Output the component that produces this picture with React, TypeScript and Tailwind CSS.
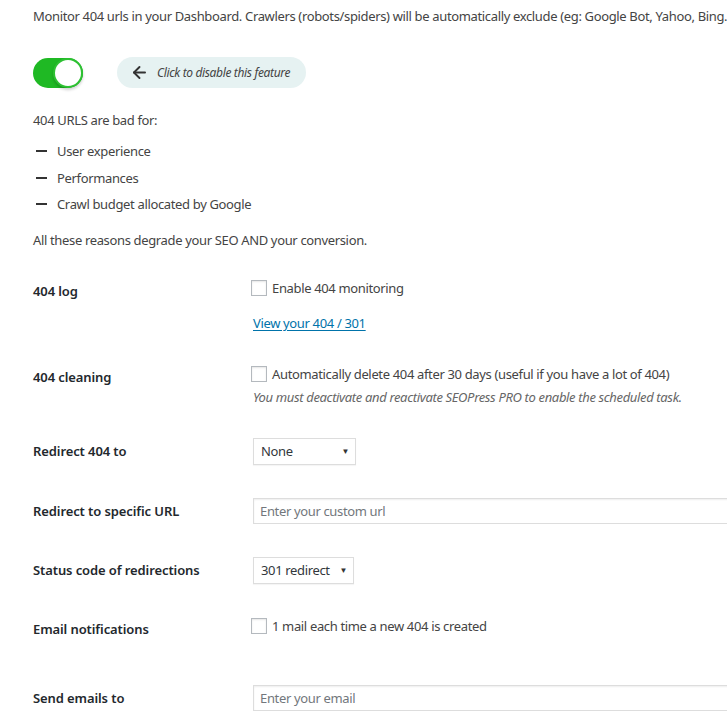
import React from "react";
import { ArrowLeft } from "lucide-react";

const Checkbox = () => (
  <span className="inline-block w-4 h-4 shrink-0 border border-[#b4b9be] bg-white shadow-[inset_0_1px_2px_rgba(0,0,0,0.1)]" />
);

const Select = ({ value, width }: { value: string; width: string }) => (
  <div
    className={`${width} h-[27px] flex items-center justify-between pl-[7px] pr-[6px] border border-[#ddd] bg-white shadow-[0_1px_1px_rgba(0,0,0,0.04)] text-[#32373c]`}
  >
    <span>{value}</span>
    <span className="text-[8px] leading-none text-[#333]">▼</span>
  </div>
);

const TextInput = ({ placeholder }: { placeholder: string }) => (
  <div className="w-[600px] h-[26px] flex items-center px-[6px] border border-[#ddd] bg-white shadow-[inset_0_1px_2px_rgba(0,0,0,0.07)] text-[#72777c]">
    {placeholder}
  </div>
);

const Row = ({
  label,
  className,
  children,
}: {
  label: string;
  className: string;
  children: React.ReactNode;
}) => (
  <div className={`flex ${className}`}>
    <div className="w-[220px] shrink-0 pt-[3px] font-semibold tracking-[-0.1px] text-[#23282d]">
      {label}
    </div>
    <div className="flex flex-col">{children}</div>
  </div>
);

const App = () => {
  return (
    <div
      className="w-[727px] h-[723px] overflow-hidden bg-white text-[13px] leading-5 tracking-[-0.35px] text-[#444]"
      style={{ fontFamily: '"Noto Sans", "Open Sans", sans-serif' }}
    >
      <div className="w-[1000px] pl-[33px] pt-[6px]">
        <p className="whitespace-nowrap">
          Monitor 404 urls in your Dashboard. Crawlers (robots/spiders) will be
          automatically exclude (eg: Google Bot, Yahoo, Bing...).
        </p>

        <div className="flex items-center gap-[34px] mt-[31px]">
          <div className="relative w-[50px] h-[30px] rounded-full bg-[#1fb924]">
            <span className="absolute right-0 top-0 w-[30px] h-[30px] rounded-full bg-white border-2 border-[#2dc132] shadow-[0_2px_3px_rgba(0,0,0,0.2)]" />
          </div>
          <div className="flex items-center gap-[8px] h-[31px] w-[189px] pl-[13px] rounded-full bg-[#e6f2f2]">
            <ArrowLeft size={19} strokeWidth={2.4} className="text-[#333]" />
            <span className="italic text-[12px] text-[#444]">
              Click to disable this feature
            </span>
          </div>
        </div>

        <p className="mt-[22px]">404 URLS are bad for:</p>
        <ul className="mt-[8px]">
          {[
            "User experience",
            "Performances",
            "Crawl budget allocated by Google",
          ].map((item) => (
            <li key={item} className="flex items-center h-[26.5px]">
              <span className="inline-block w-[11px] h-[2px] bg-[#333] ml-[3px] mr-[10px]" />
              {item}
            </li>
          ))}
        </ul>
        <p className="mt-[12px]">
          All these reasons degrade your SEO AND your conversion.
        </p>

        <Row label="404 log" className="mt-[28px]">
          <div className="flex items-center gap-[5px] h-5 -ml-[2px]">
            <Checkbox />
            <span>Enable 404 monitoring</span>
          </div>
          <a
            href="#"
            className="mt-[15px] text-[#0073aa] underline underline-offset-2"
          >
            View your 404 / 301
          </a>
        </Row>

        <Row label="404 cleaning" className="mt-[31px]">
          <div className="flex items-center gap-[5px] h-5 -ml-[2px] whitespace-nowrap">
            <Checkbox />
            <span>
              Automatically delete 404 after 30 days (useful if you have a lot
              of 404)
            </span>
          </div>
          <p className="mt-[3px] italic text-[#666] whitespace-nowrap">
            You must deactivate and reactivate SEOPress PRO to enable the
            scheduled task.
          </p>
        </Row>

        <Row label="Redirect 404 to" className="mt-[31px]">
          <Select value="None" width="w-[103px]" />
        </Row>

        <Row label="Redirect to specific URL" className="mt-[33px]">
          <TextInput placeholder="Enter your custom url" />
        </Row>

        <Row label="Status code of redirections" className="mt-[33px]">
          <Select value="301 redirect" width="w-[101px]" />
        </Row>

        <Row label="Email notifications" className="mt-[32px]">
          <div className="flex items-center gap-[5px] h-5 -ml-[2px]">
            <Checkbox />
            <span>1 mail each time a new 404 is created</span>
          </div>
        </Row>

        <Row label="Send emails to" className="mt-[46px]">
          <TextInput placeholder="Enter your email" />
        </Row>
      </div>
    </div>
  );
};

export default App;
